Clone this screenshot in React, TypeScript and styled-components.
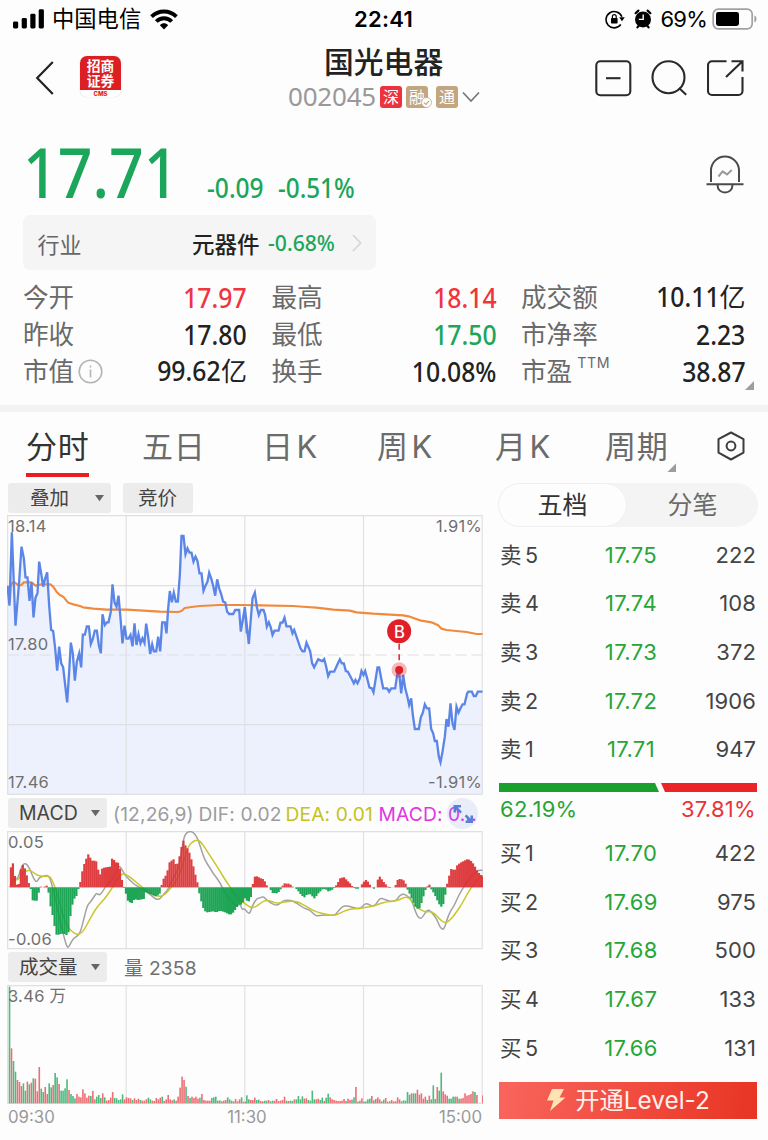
import React from 'react';
import styled, { createGlobalStyle } from 'styled-components';

const GREEN = '#1ba65b';
const RED = '#ee3540';
const BOOK_GREEN = '#27a536';

const UI = `Inter, "Noto Sans CJK SC", sans-serif`;
const NUM = `"Noto Sans", "Noto Sans CJK SC", sans-serif`;

const GlobalStyle = createGlobalStyle`
  * { box-sizing: border-box; }
  body { margin: 0; background: #fdfdfd; font-family: ${UI}; color: #222; }
  svg { display: block; flex: none; }
`;

const Screen = styled.div`
  width: 768px;
  height: 1140px;
  overflow: hidden;
  background: #fdfdfd;
  display: flex;
  flex-direction: column;
`;

/* ---------- status bar ---------- */

const StatusBar = styled.div`
  height: 40px;
  padding: 0 11px 2px 13px;
  display: grid;
  grid-template-columns: 341px 1fr 1fr;
  align-items: center;
  color: #000;
`;

const StatusGroup = styled.div<{ $end?: boolean }>`
  display: flex;
  align-items: center;
  justify-content: ${(p) => (p.$end ? 'flex-end' : 'flex-start')};
`;

const Carrier = styled.span`
  font-size: 22.3px;
  line-height: 30px;
  margin: 0 9px 0 8px;
`;

const Clock = styled.span`
  font-size: 22px;
  font-weight: 600;
  line-height: 30px;
  letter-spacing: 0.3px;
`;

const AlarmSlot = styled.span`
  margin-left: 9px;
`;

const BatteryText = styled.span`
  font-size: 22px;
  line-height: 30px;
  margin: 0 5px 0 9px;
  letter-spacing: -0.8px;
`;

/* ---------- title bar ---------- */

const TitleBar = styled.header`
  height: 76px;
  display: grid;
  grid-template-columns: 288px 1fr 190px;
`;

const TitleLeft = styled.div`
  display: flex;
  align-items: flex-start;
  padding: 16px 0 0 35px;
`;

const BrokerLogo = styled.div`
  width: 41px;
  height: 41px;
  margin-left: 26px;
  border-radius: 7px;
  overflow: hidden;
  background: #fff;
  box-shadow: 0 0 1px #bbb;
  text-align: center;
`;

const LogoMark = styled.div`
  height: 33.5px;
  padding-top: 3px;
  background: #dc1f22;
  color: #fff;
  font-size: 13.8px;
  font-weight: 700;
`;

const LogoLine = styled.div`
  height: 14.5px;
  line-height: 14.5px;
`;

const LogoCaption = styled.div`
  font-size: 6px;
  line-height: 7px;
  font-weight: 800;
  color: #dc1f22;
`;

const TitleCenter = styled.div`
  display: flex;
  flex-direction: column;
  padding-top: 4px;
`;

const StockName = styled.h1`
  margin: 0 0 0 36px;
  font-size: 29.8px;
  font-weight: 500;
  line-height: 36px;
`;

const CodeRow = styled.div`
  display: flex;
  align-items: center;
  height: 34px;
`;

const StockCode = styled.span`
  width: 92px;
  font-family: ${NUM};
  font-size: 26px;
  line-height: 32px;
  margin-top: -2px;
  letter-spacing: -0.2px;
  color: #999;
`;

const Badge = styled.span<{ $bg: string; $gap?: number }>`
  position: relative;
  width: 22px;
  height: 22px;
  margin-right: ${(p) => p.$gap ?? 4}px;
  border-radius: 3px;
  background: ${(p) => p.$bg};
  color: #fff;
  font-size: 16px;
  line-height: 22px;
  text-align: center;
`;

const BadgeTick = styled.svg`
  position: absolute;
  right: -4px;
  bottom: 0;
`;

const TitleActions = styled.div`
  display: flex;
  justify-content: space-between;
  padding: 20px 24px 0 17px;
`;

/* ---------- quote ---------- */

const PriceRow = styled.div`
  height: 99px;
  display: flex;
  align-items: flex-start;
  padding-right: 24px;
`;

const Figure = styled.span<{ $squeeze: number; $from: 'left' | 'right' }>`
  display: inline-block;
  transform: scaleX(${(p) => p.$squeeze});
  transform-origin: ${(p) => p.$from} center;
`;

const LastPrice = styled.div`
  width: 185px;
  padding: 15px 0 0 23px;
  font-family: ${NUM};
  font-size: 69px;
  font-weight: 500;
  line-height: 80px;
  color: ${GREEN};
`;

const Change = styled.div`
  flex: 1;
  display: grid;
  grid-template-columns: 70.5px 1fr;
  padding: 54.5px 0 0 22px;
  font-family: ${NUM};
  font-size: 26.8px;
  font-weight: 500;
  line-height: 34px;
  color: ${GREEN};
`;

const BellSlot = styled.div`
  padding-top: 39px;
`;

const Industry = styled.div`
  width: 353px;
  height: 55px;
  margin-left: 22.5px;
  padding: 0 14px 0 15px;
  display: flex;
  align-items: center;
  border-radius: 7px;
  background: #f5f5f5;
  font-size: 22px;
`;

const IndustryLabel = styled.span`
  flex: 1;
  color: #666;
`;

const IndustryName = styled.span`
  font-size: 22.5px;
  font-weight: 500;
  margin-right: 8px;
`;

const IndustryChange = styled.span`
  width: 84px;
  font-family: ${NUM};
  font-size: 22.5px;
  font-weight: 500;
  color: ${GREEN};
`;

const Stats = styled.div`
  height: 135px;
  padding: 8.5px 21.5px 0 23px;
  display: grid;
  grid-template-columns: 224px 225px 224.5px;
  grid-auto-rows: 37.2px;
  column-gap: 24.5px;
`;

const Stat = styled.div`
  position: relative;
  display: flex;
  align-items: center;
  justify-content: space-between;
  line-height: 37px;
`;

const StatLabel = styled.span`
  display: flex;
  align-items: center;
  font-size: 25.6px;
  color: #6a6a6a;
`;

const Superscript = styled.sup`
  font-size: 14.2px;
  line-height: 18px;
  margin: -17px 0 0 5px;
  letter-spacing: 0.6px;
`;

const StatValue = styled.span<{ $color?: string }>`
  font-family: ${NUM};
  font-size: 26.8px;
  font-weight: 500;
  color: ${(p) => p.$color ?? '#222'};
`;

const Unit = styled.span`
  font-size: 26px;
  font-weight: 400;
`;

const Corner = styled.i<{ $right: number; $bottom: number }>`
  position: absolute;
  right: ${(p) => p.$right}px;
  bottom: ${(p) => p.$bottom}px;
  width: 9px;
  height: 9px;
  background: #9a9da3;
  clip-path: polygon(100% 0, 100% 100%, 0 100%);
`;

const Divider = styled.div`
  height: 7px;
  background: #f2f2f2;
`;

/* ---------- period tabs ---------- */

const Tabs = styled.nav`
  height: 71px;
  display: grid;
  grid-template-columns: 116px 120px 115px 118px 110px 112px 28px;
  justify-items: start;
  align-items: start;
  padding-left: 26px;
`;

const Tab = styled.div<{ $active?: boolean }>`
  position: relative;
  height: 65px;
  padding-top: 12px;
  font-size: 31px;
  line-height: 45px;
  letter-spacing: 0.7px;
  word-spacing: -6.5px;
  color: ${(p) => (p.$active ? '#333' : '#6b6b6b')};
  border-bottom: 4px solid ${(p) => (p.$active ? '#ec1c24' : 'transparent')};
`;

const TabSettings = styled.div`
  padding-top: 19px;
`;

/* ---------- body ---------- */

const Body = styled.div`
  flex: 1;
  display: flex;
  padding: 0 10px 0 7px;
  justify-content: space-between;
`;

const Charts = styled.section`
  width: 476px;
`;

const ToolRow = styled.div<{ $h: number }>`
  height: ${(p) => p.$h}px;
  padding-left: 1px;
  display: flex;
  align-items: flex-start;
`;

const Chip = styled.div<{ $w: number }>`
  width: ${(p) => p.$w}px;
  height: 29.5px;
  padding: 1px 7px 0 11px;
  display: flex;
  align-items: center;
  justify-content: space-between;
  border-radius: 3px;
  background: #ececec;
  color: #444;
  font-size: 19.5px;
  line-height: 29px;

  & + & { margin-left: 12px; padding: 1px 15px 0; }
`;

const ChipText = styled.span<{ $indent?: number }>`
  padding-left: ${(p) => p.$indent ?? 0}px;
`;

const Legend = styled.div`
  position: relative;
  flex: 1;
  height: 30px;
  display: flex;
  padding-left: 6px;
  font-size: 19.2px;
  line-height: 32px;
  letter-spacing: 0.15px;
  white-space: nowrap;
  color: #9c9ca0;
`;

const LegendItem = styled.span<{ $color?: string; $w: number }>`
  width: ${(p) => p.$w}px;
  color: ${(p) => p.$color ?? '#9c9ca0'};
`;

const ExpandButton = styled.div`
  position: absolute;
  right: 5px;
  top: 0;
  width: 31px;
  height: 31px;
  border-radius: 50%;
  background: rgba(110, 145, 225, 0.14);
  display: grid;
  place-items: center;
`;

const Plot = styled.div<{ $h: number }>`
  position: relative;
  height: ${(p) => p.$h}px;
`;

const AxisLabel = styled.span<{ $top: number; $right?: boolean }>`
  position: absolute;
  top: ${(p) => p.$top}px;
  ${(p) => (p.$right ? 'right: 1px;' : 'left: 1px;')}
  font-size: 16.5px;
  line-height: 20px;
  letter-spacing: 0.3px;
  color: #707070;
`;

const TimeAxis = styled.div`
  height: 28px;
  display: flex;
  justify-content: space-between;
  font-size: 16.8px;
  line-height: 28px;
  color: #999;
  padding: 0 1px;
`;

/* ---------- order book ---------- */

const Book = styled.section`
  width: 260px;
`;

const Segmented = styled.div`
  height: 44px;
  border-radius: 22px;
  background: #f4f4f4;
  display: grid;
  grid-template-columns: 129px 1fr;
`;

const Segment = styled.div<{ $active?: boolean }>`
  border-radius: 22px;
  text-align: center;
  font-size: 25px;
  line-height: ${(p) => (p.$active ? 42 : 44)}px;
  color: ${(p) => (p.$active ? '#333' : '#6b6b6b')};
  background: ${(p) => (p.$active ? '#fdfdfd' : 'transparent')};
  border: ${(p) => (p.$active ? '1px solid #f0f0f0' : '0')};
`;

const BookSide = styled.div<{ $pt: number }>`
  padding: ${(p) => p.$pt}px 2px 0 2px;
`;

const BookRow = styled.div`
  height: 48.6px;
  display: grid;
  grid-template-columns: 84px 94px 1fr;
  align-items: center;
  font-size: 22px;
  line-height: 30px;
  color: #444;
`;

const BookName = styled.span`
  font-size: 21.5px;
  word-spacing: -2.5px;
`;

const BookPrice = styled.span`
  text-align: center;
  color: ${BOOK_GREEN};
  letter-spacing: 0.4px;
`;

const BookVolume = styled.span`
  text-align: right;
  letter-spacing: 0.1px;
`;

const RatioBar = styled.div`
  margin: 9.5px 1px 0 1px;
  height: 9px;
  display: flex;
`;

const RatioPart = styled.div<{ $buy?: boolean }>`
  flex: ${(p) => (p.$buy ? '160px 0 0' : '1')};
  margin-left: ${(p) => (p.$buy ? 0 : 2)}px;
  background: ${(p) => (p.$buy ? '#1aa02c' : '#ea2427')};
  clip-path: ${(p) =>
    p.$buy
      ? 'polygon(0 0, calc(100% - 4px) 0, 100% 100%, 0 100%)'
      : 'polygon(0 0, 100% 0, 100% 100%, 4px 100%)'};
`;

const RatioText = styled.div`
  display: flex;
  justify-content: space-between;
  padding: 2px 2px 0 2px;
  font-size: 22px;
  line-height: 31px;
  letter-spacing: 0.3px;
  color: #e83438;
`;

const RatioBuy = styled.span`
  color: ${BOOK_GREEN};
`;

const LevelButton = styled.div`
  height: 37px;
  margin: 10px 1px 0 1px;
  display: flex;
  align-items: center;
  justify-content: center;
  gap: 9px;
  background: linear-gradient(100deg, #f9655d, #e83423);
  color: #fff0ea;
  font-size: 24.3px;
  line-height: 36px;
`;

/* ---------- chart data (drawing units are a third of a pixel) ---------- */

type Pt = [number, number];

const pts = (s: string): Pt[] => s.trim().split(/\s+/).map((p) => p.split(',').map(Number) as Pt);
const shift = (list: Pt[], dx: number): Pt[] => list.map(([x, y]) => [x + dx, y]);
const toPath = (list: Pt[]) => 'M' + list.map(([x, y]) => `${x} ${y}`).join('L');

const toSmooth = (list: Pt[]) => {
  let d = `M${list[0][0]} ${list[0][1]}`;
  for (let i = 1; i < list.length - 1; i++) {
    const mx = (list[i][0] + list[i + 1][0]) / 2;
    const my = (list[i][1] + list[i + 1][1]) / 2;
    d += `Q${list[i][0]} ${list[i][1]} ${mx} ${my}`;
  }
  const last = list[list.length - 1];
  return d + `L${last[0]} ${last[1]}`;
};

const price: Pt[] = [
  ...pts(`23,512 29,572 36,352 47,632 58,500 65,395 72,430 77,487 83,487 89,558 95,502 101,607 107,548 113,535 118,440
  124,475 130,515 136,490 142,472 148,572 154,645 160,648 166,700 172,767 178,695 184,745 190,757 196,810 202,862 208,770
  213,683 219,715 225,797 231,740 238,715 244,757 249,659 255,659 261,634 267,634 273,687 279,672 285,647 291,647 297,690
  303,715 308,598 315,630 321,622 326,622 333,590 338,508 344,562 350,575 356,542 362,610 368,685 374,632 380,671 386,671
  392,660 398,694 404,625 410,690 416,658 422,685 428,670 434,684 439,626 445,665 451,717 457,688 462,709 469,709 475,665
  481,709 487,622 495,622 500,655 505,580 510,528 516,562 522,533 528,560 534,560 540,480 545,363 551,363 557,418 563,400
  569,413 575,413 581,440 587,425 593,438 599,475 605,475 611,527 617,512 623,500 628,473 634,490 640,512 646,542 652,493
  658,520 664,537 670,560 676,562 682,590 688,597 700,597 706,585 718,585 723,650 729,615 735,576 741,655`),
  ...shift(pts(`15,577 21,632 27,687 38,550 45,533 51,575 57,600 63,585 71,585 76,600 81,635 87,622 93,638 98,660 104,647
  116,647 122,623 128,623 134,608 140,634 152,634 158,655 163,645 170,665 182,700 188,709 194,709 200,683 206,697 211,709
  217,745 223,757 235,733 247,738 253,732 259,755 265,783 271,770 283,770 293,748 300,733 306,745 312,745 318,768 324,770
  336,793 342,805 347,795 353,805 360,790 365,768 371,780 376,768 382,790 389,818 396,820 401,832 407,795 413,757 418,757
  424,790 430,820 442,820 448,830 454,820 466,820 472,780 477,762 484,835 490,780 496,820 502,842 508,870 514,850 519,900
  525,942 537,942 543,907 549,893 555,868 561,880 568,880 574,942 580,955 585,978 591,978 597,1025 602,1042 608,1010
  615,965 620,912 626,935 632,865 638,925 644,945 650,875 656,893 662,880 668,868 674,868 682,835 686,830 696,830 702,843
  708,843 714,830 728,830`), 720),
];

const average: Pt[] = [
  ...pts(`30,560 33,515 37,503 45,503 58,512 65,510 72,502 95,502 107,512 125,508 152,508 160,515 170,530 180,540 190,545
  205,563 220,568 240,573 250,577 280,581 320,584 380,584 480,590 535,591 545,588 555,579 575,576 600,573 660,570 720,570`),
  ...shift(pts(`60,571 160,573 200,576 230,578 280,584 330,587 350,592 400,596 490,601 510,605 540,616 575,622 595,631
  605,641 620,645 650,648 680,651 710,657 728,657`), 720),
];

const dif: Pt[] = [
  ...pts(`32,288 40,268 48,266 55,262 65,230 72,219 82,222 92,240 100,262 110,277 118,262 128,258 142,254 150,262 158,290
  168,330 178,380 190,430 198,460 204,474 212,460 220,445 228,440 240,430 250,395 262,345 272,335 282,320 290,308 298,315
  308,305 316,290 326,280 340,262 350,245 358,225 368,240 376,255 390,270 405,283 420,292 432,300 445,308 460,320 470,328
  482,325 492,310 503,300 510,285 520,262 535,240 545,185 552,142 560,127 570,123 580,126 592,140 602,170 615,210 630,232
  640,250 660,275 680,318 700,338 712,348 722,340`),
  ...shift(pts(`6,358 15,355 23,367 30,370 38,345 50,325 60,323 70,318 80,328 95,340 112,346 125,335 135,330 150,329
  165,335 180,345 195,355 210,358 225,375 235,377 260,373 285,376 295,362 308,348 320,346 335,350 350,354 362,355 375,340
  385,341 400,349 410,340 420,323 432,326 445,332 460,333 470,330 480,314 492,311 502,316 515,328 528,368 538,385 548,382
  558,363 568,358 580,372 590,385 600,410 608,418 615,412 622,385 632,362 642,348 652,325 665,300 675,285 690,262 705,248
  715,240 728,240`), 720),
];

const dea: Pt[] = [
  ...pts(`30,290 38,272 48,270 58,266 66,250 80,241 92,240 105,250 118,257 135,258 150,257 158,272 168,297 180,340 192,385
  205,412 218,425 232,433 245,428 255,415 268,390 285,360 300,340 315,325 330,303 345,280 360,255 370,250 385,256 400,268
  420,285 440,300 460,312 475,318 488,317 500,308 515,290 530,272 545,235 555,200 565,170 575,156 592,148 605,156 620,180
  640,210 660,242 680,275 695,295 705,312 720,330`),
  ...shift(pts(`12,337 25,347 37,353 50,348 65,336 80,329 95,333 110,339 125,337 150,332 170,333 185,340 205,352 230,365
  260,372 280,376 295,372 310,363 335,355 360,355 380,350 400,348 420,340 440,334 465,333 485,325 500,319 512,326 522,343
  540,357 555,365 575,363 590,375 605,393 618,398 632,388 645,372 665,343 680,315 695,290 710,272 728,255`), 720),
];

const histogram: Pt[] = [
  ...pts(`30,0 33,72 42,72 45,25 50,8 57,10 61,50 67,68 73,62 79,38 84,30 87,5 90,0 96,-15 98,-40 112,-40 117,-8 120,3
  127,0 138,4 143,8 146,-20 152,-60 158,-85 165,-125 170,-145 180,-140 190,-138 203,-145 208,-120 212,-75 220,-38 230,-25
  236,0 242,20 247,50 255,78 265,100 270,90 275,80 288,80 295,50 300,38 307,58 320,60 332,62 336,86 344,80 350,72 356,75
  361,50 366,20 371,0 378,-20 384,-42 395,-48 403,-35 415,-38 432,-35 437,-15 445,-18 455,-22 468,-28 480,-18 484,5 490,25
  500,40 508,75 520,85 526,70 535,72 541,110 550,140 555,128 563,115 570,100 575,80 582,55 590,20 594,10 597,-15 603,-40
  612,-70 620,-75 640,-72 650,-75 660,-70 675,-75 690,-83 700,-75 710,-60 718,-50`),
  ...shift(pts(`0,-52 5,-52 15,-32 20,-40 28,-42 34,-25 37,0 41,30 48,34 60,28 72,24 78,8 85,0 92,-8 98,-17 112,-18
  120,-10 126,3 132,12 150,10 157,2 165,0 175,-12 185,-25 193,-30 200,-22 210,-20 223,-33 235,-18 248,-5 256,-5 264,-12
  275,-8 285,0 292,12 300,27 312,30 320,22 330,12 337,2 345,-4 355,-4 362,4 370,16 378,22 385,15 393,2 400,-5 408,0 412,20
  418,34 424,25 432,15 440,5 448,-2 460,0 468,8 475,28 482,22 488,26 497,10 501,-5 507,-15 513,-30 520,-45 528,-62 537,-66
  545,-45 555,-10 560,0 567,10 572,-3 582,-18 590,-35 602,-60 610,-50 616,-20 620,5 626,28 632,55 645,52 652,68 665,76
  680,84 690,82 697,75 705,62 712,48 718,42 725,35 732,32`), 720),
];

const BAR_STEP = 5.95;

const sampleAt = (list: Pt[], x: number) => {
  for (let i = 1; i < list.length; i++) {
    if (x <= list[i][0]) {
      const [x0, y0] = list[i - 1];
      const [x1, y1] = list[i];
      return y0 + ((y1 - y0) * (x - x0)) / (x1 - x0);
    }
  }
  return 0;
};

/* Negative volume marks a falling minute. */
const volumeMorning = [
  -350, 165, -127, -95, 70, 64, 52, -60, -38, 65, -57, 62, -75, 74, 36, 109, -44, -34, 49, 28, -60, -48, 55, -91, -78, 58,
  -38, -38, -45, -72, 40, -28, -22, -15, 28, 20, 18, 42, 30, 17, 23, -22, 37, 12, -20, -25, -16, 30, -18, 8, 10, 17, 34,
  -16, -15, -10, -12, -27, 12, 18, 16, 15, -10, 15, 10, 14, -10, 8, 8, 12, -17, -12, 8, 7, 16, 12, 17, -20, 7, 12, 25, 12,
  9, -12, 8, 20, 47, 80, 70, -50, 22, -16, 20, 16, 20, 14, -17, 28, 10, 8, 8, 8, -16, -18, -20, 8, -9, 6, 8, 10, -18, -12,
  -8, 6, 13, 6, 12, -18, 5, 5,
];
const volumeAfternoon = [
  -24, -12, 10, 10, 17, -10, -11, 7, 6, -8, -8, 10, -6, -8, 8, 13, 7, 8, 10, 20, -8, 7, -8, -7, 12, -12, -22, -12, -21, 14,
  15, -10, -8, -38, -12, 12, 14, -10, -17, 7, -17, -29, 18, 12, 10, 8, 7, 7, 8, 13, -7, 14, 10, -11, -18, 49, -5, 8, 15, -5,
  -6, -12, -14, 22, -9, 13, 18, 12, -6, -11, 16, 5, -6, 10, 6, 6, 18, 12, -6, -9, -8, -34, -26, 30, -30, -30, 41, 26, 30,
  14, 20, -10, 23, -12, -54, -13, 49, -38, -92, 36, 27, 23, -14, -14, -20, -20, 20, -14, 14, 16, 30, 23, 25, 28, 36, -34,
  25, 0, 0, 24,
];

const GRID = '#e0e0e2';

const Frame = ({ top, bottom }: { top: number; bottom: number }) => (
  <path
    d={`M23.5 ${top}H1447V${bottom}H23.5ZM379 ${top}V${bottom}M735 ${top}V${bottom}M1091 ${top}V${bottom}`}
    fill="none"
    stroke={GRID}
    strokeWidth="3.5"
  />
);

const PriceChart = () => (
  <svg width="476" height="280" viewBox="21.5 300 1428 840">
    <path d={toPath(price) + 'L1448 1138L23 1138Z'} fill="#edf1fd" />
    <Frame top={302} bottom={1138} />
    <path d="M23 512H1447M23 929H1447" stroke={GRID} strokeWidth="3.5" />
    <path d="M23 720H1447" stroke={GRID} strokeWidth="3.5" strokeDasharray="34 14" />
    <path d={toPath(average)} fill="none" stroke="#f08a3c" strokeWidth="6.5" strokeLinejoin="round" />
    <path d={toPath(price)} fill="none" stroke="#5b86e8" strokeWidth="7" strokeLinejoin="miter" strokeMiterlimit="5" />
    <path d="M1198 686V748" stroke="#e11f26" strokeWidth="4.5" strokeDasharray="18 14" />
    <circle cx="1198" cy="765" r="23" fill="#e11f26" opacity="0.3" />
    <circle cx="1198" cy="765" r="12" fill="#e11f26" />
    <circle cx="1198" cy="649" r="36" fill="#e11f26" />
    <text x="1199" y="668" textAnchor="middle" fontSize="50" fontWeight="500" fontFamily="Inter, sans-serif" fill="#fff">
      B
    </text>
  </svg>
);

const MacdChart = () => {
  const bars = Array.from({ length: 239 }, (_, i) => {
    const x = 30 + i * BAR_STEP;
    return { x, v: Math.round(sampleAt(histogram, x + 2.5)) };
  }).filter((b) => Math.abs(b.v) > 1);
  return (
    <svg width="476" height="119" viewBox="21.5 122 1428 357">
      <Frame top={124} bottom={475} />
      <path d="M23 291H1447" stroke={GRID} strokeWidth="2" />
      <path d={toSmooth(dif)} fill="none" stroke="#a2a2a4" strokeWidth="4.5" />
      <path d={toSmooth(dea)} fill="none" stroke="#c9c62a" strokeWidth="4.5" />
      <g opacity="0.93">
        {bars.map((b) => (
          <rect
            key={b.x}
            x={b.x}
            y={b.v > 0 ? 291 - b.v : 291}
            width="6.6"
            height={Math.abs(b.v)}
            fill={b.v > 0 ? '#dd3033' : '#0f9f4a'}
          />
        ))}
      </g>
    </svg>
  );
};

const VolumeBars = ({ from, data }: { from: number; data: number[] }) => (
  <>
    {data.map((v, i) => (
      <rect
        key={i}
        x={from + i * BAR_STEP - 2.3}
        y={458 - Math.abs(v)}
        width="4.8"
        height={Math.abs(v)}
        fill={v > 0 ? '#ea7075' : '#4fb97e'}
      />
    ))}
  </>
);

const VolumeChart = () => (
  <svg width="476" height="120" viewBox="21.5 103 1428 360">
    <Frame top={105} bottom={458} />
    <VolumeBars from={29} data={volumeMorning} />
    <VolumeBars from={741} data={volumeAfternoon} />
  </svg>
);

/* ---------- icons ---------- */

const SignalIcon = () => (
  <svg width="31" height="20" viewBox="0 0 31 20">
    <rect x="0" y="12.5" width="5.2" height="7" rx="1.4" />
    <rect x="8.7" y="9" width="5.2" height="10.5" rx="1.4" />
    <rect x="17.3" y="4.8" width="5.2" height="14.7" rx="1.4" />
    <rect x="25.7" y="0.3" width="5.2" height="19.2" rx="1.4" />
  </svg>
);

const WifiIcon = () => (
  <svg width="28" height="21" viewBox="0 0 28 21" fill="none" stroke="#000" strokeWidth="3.9">
    <path d="M1.6 7.6C8.4 0.8 19.6 0.8 26.4 7.6" />
    <path d="M6.3 12.5C10.6 8.1 17.4 8.1 21.7 12.5" />
    <path d="M9.9 16.2C12.4 13.7 15.6 13.7 18.1 16.2L14 20.5Z" fill="#000" stroke="none" />
  </svg>
);

const LockIcon = () => (
  <svg width="20" height="20" viewBox="0 0 20 20" fill="none">
    <path d="M16.9 7.8A8.2 8.2 0 1 0 15.8 15.6" stroke="#000" strokeWidth="1.6" />
    <path d="M14.2 8.2H19.8L17 12.2Z" fill="#000" />
    <rect x="6" y="9" width="6.6" height="5.6" rx="0.8" fill="#000" />
    <path d="M7.4 9.4V7.6a1.9 1.9 0 0 1 3.8 0V9.4" stroke="#000" strokeWidth="1.2" />
  </svg>
);

const AlarmIcon = () => (
  <svg width="18" height="20" viewBox="0 0 18 20">
    <circle cx="9" cy="10.4" r="8" />
    <path d="M1.6 4.2L4.4 1.6M16.4 4.2L13.6 1.6M3.4 18.4L5 16.5M14.6 18.4L13 16.5" stroke="#000" strokeWidth="2.2" strokeLinecap="round" />
    <path d="M9.2 5.5V10.4H4.8" stroke="#fff" strokeWidth="1.4" fill="none" />
  </svg>
);

const BatteryIcon = () => (
  <svg width="45" height="22" viewBox="0 0 45 22">
    <rect x="1.2" y="1.2" width="39" height="19.6" rx="5" fill="none" stroke="#a2a2a2" strokeWidth="1.7" />
    <rect x="4" y="4" width="23" height="14" rx="2.4" />
    <path d="M42.4 7.5C45.2 8.4 45.2 13.6 42.4 14.5Z" fill="#a2a2a2" />
  </svg>
);

const BackIcon = () => (
  <svg width="19" height="40" viewBox="0 0 19 40" fill="none" stroke="#222" strokeWidth="2.2">
    <path d="M17.8 6L2.2 22L17.8 38" />
  </svg>
);

const NoteIcon = () => (
  <svg width="37" height="37" viewBox="0 0 37 37" fill="none" stroke="#2a2a2a" strokeWidth="2.1">
    <rect x="1.3" y="1.2" width="34" height="34" rx="4" />
    <path d="M11 18.2H25.5" />
  </svg>
);

const SearchIcon = () => (
  <svg width="37" height="37" viewBox="0 0 37 37" fill="none" stroke="#2a2a2a" strokeWidth="2.1">
    <circle cx="17.5" cy="17.3" r="16" />
    <path d="M28 28L35.2 34.8" />
  </svg>
);

const ShareIcon = () => (
  <svg width="37" height="37" viewBox="0 0 37 37" fill="none" stroke="#2a2a2a" strokeWidth="2.1">
    <path d="M19.5 1.2H5a4 4 0 0 0-4 4V31a4 4 0 0 0 4 4H31.5a4 4 0 0 0 4-4V17" />
    <path d="M24.5 1.2H35.5V11.5M35.5 1.2L19 17" />
  </svg>
);

const BellIcon = () => (
  <svg width="38" height="39" viewBox="0 0 38 39" fill="none" stroke="#4a4a4a" strokeWidth="2">
    <path d="M5 27V15.5A14 14 0 0 1 33 15.5V27" />
    <path d="M0.5 29.3H37.5" />
    <path d="M11.5 30C11.5 40 26.5 40 26.5 30" />
    <path d="M12.5 21.5L16.6 16.4L21 19.4L25.8 15" stroke="#999" />
  </svg>
);

const ChevronDown = () => (
  <svg width="18" height="12" viewBox="0 0 18 12" fill="none" stroke="#777" strokeWidth="1.7">
    <path d="M1 1.5L9 10L17 1.5" />
  </svg>
);

const ChevronRight = () => (
  <svg width="10" height="18" viewBox="0 0 10 18" fill="none" stroke="#d6d6d6" strokeWidth="1.7">
    <path d="M1 1L8.6 9L1 17" />
  </svg>
);

const InfoIcon = () => (
  <svg width="29" height="25" viewBox="0 0 29 25" fill="none" stroke="#b5b5b5" strokeWidth="1.6">
    <circle cx="16.5" cy="12.5" r="11.3" />
    <path d="M16.5 10.5V18.5M16.5 6.5V8.6" />
  </svg>
);

const HexIcon = () => (
  <svg width="28" height="30" viewBox="0 0 28 30" fill="none" stroke="#3c3c3c" strokeWidth="2">
    <path d="M14 1.5L26.5 8.2V21.6L14 28.5L1.5 21.6V8.2Z" strokeLinejoin="round" />
    <circle cx="14" cy="15" r="4.4" />
  </svg>
);

const Caret = () => (
  <svg width="9" height="7" viewBox="0 0 9 7">
    <path d="M0 0H9L4.5 6.3Z" fill="#666" />
  </svg>
);

const ExpandIcon = () => (
  <svg width="20" height="20" viewBox="0 0 20 20" fill="none" stroke="#5580d8" strokeWidth="2.6">
    <path d="M1.8 8.4V2.3H8M2.4 2.8L8 8.6" />
    <path d="M18.8 11.6V17.7H12.6M18.2 17.2L12.6 11.4" />
  </svg>
);

const BoltIcon = () => (
  <svg width="20" height="24" viewBox="0 0 20 24">
    <path d="M6 1H18L13.5 9.5H19.5L4 23L7.5 12.5H1Z" fill="#ffe3b5" />
  </svg>
);

/* ---------- page ---------- */

type StatItem = {
  label: string;
  value: string;
  unit?: string;
  color?: string;
  info?: boolean;
  sup?: string;
  corner?: boolean;
};

const stats: StatItem[] = [
  { label: '今开', value: '17.97', color: RED },
  { label: '最高', value: '18.14', color: RED },
  { label: '成交额', value: '10.11', unit: '亿' },
  { label: '昨收', value: '17.80' },
  { label: '最低', value: '17.50', color: GREEN },
  { label: '市净率', value: '2.23' },
  { label: '市值', value: '99.62', unit: '亿', info: true },
  { label: '换手', value: '10.08%' },
  { label: '市盈', value: '38.87', sup: 'TTM', corner: true },
];

const asks = [
  ['卖 5', '17.75', '222'],
  ['卖 4', '17.74', '108'],
  ['卖 3', '17.73', '372'],
  ['卖 2', '17.72', '1906'],
  ['卖 1', '17.71', '947'],
];

const bids = [
  ['买 1', '17.70', '422'],
  ['买 2', '17.69', '975'],
  ['买 3', '17.68', '500'],
  ['买 4', '17.67', '133'],
  ['买 5', '17.66', '131'],
];

const Level = ({ row: [name, price, volume] }: { row: string[] }) => (
  <BookRow>
    <BookName>{name}</BookName>
    <BookPrice>{price}</BookPrice>
    <BookVolume>{volume}</BookVolume>
  </BookRow>
);

export default function App() {
  return (
    <Screen>
      <GlobalStyle />
      <StatusBar>
        <StatusGroup>
          <SignalIcon />
          <Carrier>中国电信</Carrier>
          <WifiIcon />
        </StatusGroup>
        <Clock>22:41</Clock>
        <StatusGroup $end>
          <LockIcon />
          <AlarmSlot>
            <AlarmIcon />
          </AlarmSlot>
          <BatteryText>69%</BatteryText>
          <BatteryIcon />
        </StatusGroup>
      </StatusBar>

      <TitleBar>
        <TitleLeft>
          <BackIcon />
          <BrokerLogo>
            <LogoMark>
              <LogoLine>招商</LogoLine>
              <LogoLine>证券</LogoLine>
            </LogoMark>
            <LogoCaption>CMS</LogoCaption>
          </BrokerLogo>
        </TitleLeft>
        <TitleCenter>
          <StockName>国光电器</StockName>
          <CodeRow>
            <StockCode>002045</StockCode>
            <Badge $bg="#ec333d">深</Badge>
            <Badge $bg="#c4a67e" $gap={8}>
              融
              <BadgeTick width="11" height="11" viewBox="0 0 11 11">
                <circle cx="5.5" cy="5.5" r="5" fill="#fff" stroke="#c4a67e" strokeWidth="0.8" />
                <path d="M3 5.6L4.9 7.4L8.1 3.9" fill="none" stroke="#c4a67e" strokeWidth="1.1" />
              </BadgeTick>
            </Badge>
            <Badge $bg="#c4a67e">通</Badge>
            <ChevronDown />
          </CodeRow>
        </TitleCenter>
        <TitleActions>
          <NoteIcon />
          <SearchIcon />
          <ShareIcon />
        </TitleActions>
      </TitleBar>

      <PriceRow>
        <LastPrice>
          <Figure $squeeze={0.88} $from="left">17.71</Figure>
        </LastPrice>
        <Change>
          <Figure $squeeze={0.915} $from="left">-0.09</Figure>
          <Figure $squeeze={0.905} $from="left">-0.51%</Figure>
        </Change>
        <BellSlot>
          <BellIcon />
        </BellSlot>
      </PriceRow>

      <Industry>
        <IndustryLabel>行业</IndustryLabel>
        <IndustryName>元器件</IndustryName>
        <IndustryChange>
          <Figure $squeeze={0.94} $from="left">-0.68%</Figure>
        </IndustryChange>
        <ChevronRight />
      </Industry>

      <Stats>
        {stats.map((s) => (
          <Stat key={s.label}>
            <StatLabel>
              {s.label}
              {s.info && <InfoIcon />}
              {s.sup && <Superscript>{s.sup}</Superscript>}
            </StatLabel>
            <StatValue $color={s.color}>
              <Figure $squeeze={0.925} $from="right">{s.value}</Figure>
              {s.unit && <Unit>{s.unit}</Unit>}
            </StatValue>
            {s.corner && <Corner $right={-8.5} $bottom={0} />}
          </Stat>
        ))}
      </Stats>

      <Divider />

      <Tabs>
        <Tab $active>分时</Tab>
        <Tab>五日</Tab>
        <Tab>日 K</Tab>
        <Tab>周 K</Tab>
        <Tab>月 K</Tab>
        <Tab>
          周期
          <Corner $right={-8} $bottom={1} />
        </Tab>
        <TabSettings>
          <HexIcon />
        </TabSettings>
      </Tabs>

      <Body>
        <Charts>
          <ToolRow $h={32}>
            <Chip $w={103}>
              <ChipText $indent={11}>叠加</ChipText>
              <Caret />
            </Chip>
            <Chip $w={70}>
              <ChipText>竞价</ChipText>
            </Chip>
          </ToolRow>
          <Plot $h={283}>
            <PriceChart />
            <AxisLabel $top={1}>18.14</AxisLabel>
            <AxisLabel $top={119}>17.80</AxisLabel>
            <AxisLabel $top={256.5}>17.46</AxisLabel>
            <AxisLabel $top={1} $right>1.91%</AxisLabel>
            <AxisLabel $top={256.5} $right>-1.91%</AxisLabel>
          </Plot>
          <ToolRow $h={33}>
            <Chip $w={99}>
              <ChipText>MACD</ChipText>
              <Caret />
            </Chip>
            <Legend>
              <LegendItem $w={85.5}>(12,26,9)</LegendItem>
              <LegendItem $w={87}>DIF: 0.02</LegendItem>
              <LegendItem $w={93} $color="#c5c21c">DEA: 0.01</LegendItem>
              <LegendItem $w={98} $color="#e334e3">MACD: 0...</LegendItem>
              <ExpandButton>
                <ExpandIcon />
              </ExpandButton>
            </Legend>
          </ToolRow>
          <Plot $h={121}>
            <MacdChart />
            <AxisLabel $top={1}>0.05</AxisLabel>
            <AxisLabel $top={98}>-0.06</AxisLabel>
          </Plot>
          <ToolRow $h={32.5}>
            <Chip $w={99}>
              <ChipText>成交量</ChipText>
              <Caret />
            </Chip>
            <Legend>
              <LegendItem $w={120} $color="#6f6f6f">&nbsp;&nbsp;量 2358</LegendItem>
            </Legend>
          </ToolRow>
          <Plot $h={118}>
            <VolumeChart />
            <AxisLabel $top={1}>3.46 万</AxisLabel>
          </Plot>
          <TimeAxis>
            <span>09:30</span>
            <span>11:30</span>
            <span>15:00</span>
          </TimeAxis>
        </Charts>

        <Book>
          <Segmented>
            <Segment $active>五档</Segment>
            <Segment>分笔</Segment>
          </Segmented>
          <BookSide $pt={3.5}>
            {asks.map((r) => (
              <Level key={r[0]} row={r} />
            ))}
          </BookSide>
          <RatioBar>
            <RatioPart $buy />
            <RatioPart />
          </RatioBar>
          <RatioText>
            <RatioBuy>62.19%</RatioBuy>
            <span>37.81%</span>
          </RatioText>
          <BookSide $pt={4}>
            {bids.map((r) => (
              <Level key={r[0]} row={r} />
            ))}
          </BookSide>
          <LevelButton>
            <BoltIcon />
            <span>开通Level-2</span>
          </LevelButton>
        </Book>
      </Body>
    </Screen>
  );
}
